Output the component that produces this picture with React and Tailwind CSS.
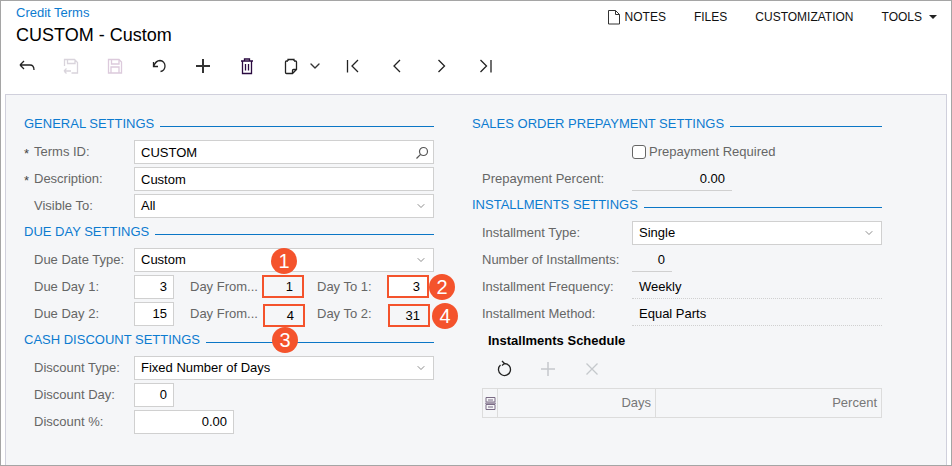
import React from 'react';
import { ChevronDown } from 'lucide-react';

const Heading = ({ children }) => (
  <div className="flex h-[27px] items-start gap-1.5">
    <span className="mt-px text-[13px] whitespace-nowrap text-[#0c7bd0]">{children}</span>
    <span className="mt-[13px] h-px flex-1 bg-[#0b76c6]" />
  </div>
);

const Label = ({ children, req, className = 'w-[100px]' }) => (
  <div className={`relative shrink-0 whitespace-nowrap text-[#666] ${className}`}>
    {req && <span className="absolute -left-[10px] top-[2px] text-[#444]">*</span>}
    {children}
  </div>
);

const Box = ({ children, className = '', right, select, search }) => (
  <div className={`flex h-6 items-center border border-[#d0d0d0] bg-white px-1.5 text-black ${right ? 'justify-end' : 'justify-between'} ${className}`}>
    <span className="whitespace-nowrap">{children}</span>
    {select && <ChevronDown size={12} strokeWidth={1.5} className="text-[#666]" />}
    {search && (
      <svg width="14" height="14" viewBox="0 0 14 14" fill="none" stroke="#555" strokeWidth="1.2" className="-mr-0.5">
        <circle cx="8.5" cy="5.5" r="4" />
        <path d="M5.6 8.4 1.5 12.5" />
      </svg>
    )}
  </div>
);

const Row = ({ children }) => <div className="mb-[3px] flex h-6 items-center pl-[10px]">{children}</div>;

const Marked = ({ children, className = '' }) => (
  <div className={`flex h-[23px] w-[42px] items-center justify-end self-start border-2 border-[#f4532c] text-black ${className}`}>{children}</div>
);

const Badge = ({ n, className }) => (
  <div className={`absolute flex h-[26px] w-[26px] items-center justify-center rounded-full bg-[#f4532c] text-[20px] text-white ${className}`}>{n}</div>
);

const Ico = ({ children, className = '', stroke = '#222' }) => (
  <svg width="20" height="20" viewBox="0 0 20 20" fill="none" stroke={stroke} strokeWidth="1.3" className={`shrink-0 ${className}`}>
    {children}
  </svg>
);

const Toolbar = () => (
  <div className="mt-[7px] flex h-6 items-center pl-4">
    <Ico className="mr-6"><path d="M3 9h10c2.500 0 4 1.500 4 5M3 9l4-4M3 9l4 4" /></Ico>
    <Ico className="mr-6" stroke="#d9d4dc"><path d="M3.500 10V3.500h10l3 3v10.500h-6M6.500 3.500v4h7.500v-4M3 15h7M3 15l2.500-2.500M3 15l2.500 2.500" /></Ico>
    <Ico className="mr-6" stroke="#dccadc"><path d="M3.500 3.500h10.500l2.500 2.500v11H3.500zM6.500 3.500v4.500h7.500v-4.500M6 17v-6h8v6" /></Ico>
    <Ico className="mr-6"><path d="M4.500 6v4.500h4.500M4.500 10.500C6 6.500 9 4.500 11 4.500a5.500 5.500 0 0 1 5 5.500c0 3-2 5-4.500 5.500" /></Ico>
    <Ico className="mr-6" stroke="#333"><path strokeWidth="2" d="M10 3v14M3 10h14" /></Ico>
    <Ico className="mr-6" stroke="#2a0a40"><path d="M4 5h12M7.500 5V3h5v2M5.500 5v12.500h9V5M8.500 8v6.500M11.500 8v6.500" /></Ico>
    <Ico className="mr-[6px]" stroke="#222"><path d="M7 5H5.500a1 1 0 0 0-1 1v10.500a1 1 0 0 0 1 1h6l4-4V6a1 1 0 0 0-1-1H13M7 5V3.500h6V5M15.500 13.500h-3a1 1 0 0 0-1 1v3" /></Ico>
    <ChevronDown size={16} strokeWidth={2} className="mr-5 text-[#333]" />
    <Ico className="mr-6"><path d="M4.500 4v12.500M15 4l-6 6 6 6" /></Ico>
    <Ico className="mr-6"><path d="M13 4l-6 6 6 6" /></Ico>
    <Ico className="mr-6"><path d="M7.500 4l6 6-6 6" /></Ico>
    <Ico><path d="M16 4v12.500M5.500 4l6 6-6 6" /></Ico>
  </div>
);

export default function App() {
  return (
    <div className="relative h-[466px] w-[952px] overflow-hidden border border-[#a5a5a5] bg-white text-[13px] leading-5 font-['Liberation_Sans',Arial,sans-serif]">
      <header className="h-[93px] pt-[4px]">
        <div className="flex">
          <div className="pl-[15px]">
            <div className="h-4 text-[13px] leading-4 text-[#0c7bd0]">Credit Terms</div>
            <div className="mt-[2px] h-6 text-[18px] leading-6 text-black">CUSTOM - Custom</div>
          </div>
          <nav className="ml-auto flex h-6 items-center pr-[14px] text-[12px] text-[#111]">
            <svg width="14" height="16" viewBox="0 0 14 16" fill="none" stroke="#333" className="mr-1"><path d="M1.500 15V1.500h7l4 4V15zM8.500 1.500v4h4" /></svg>
            <span>NOTES</span>
            <span className="ml-7">FILES</span>
            <span className="ml-7">CUSTOMIZATION</span>
            <span className="ml-7">TOOLS</span>
            <span className="ml-[7px] h-0 w-0 border-x-[4px] border-t-[4px] border-x-transparent border-t-[#222]" />
          </nav>
        </div>
        <Toolbar />
      </header>

      <main className="mx-1 flex h-[372px] gap-[38px] border border-[#d0d0dc] border-b-0 bg-[#f5f6f8] pl-[18px] pt-[18px]">
        <section className="w-[410px]">
          <Heading>GENERAL SETTINGS</Heading>
          <Row><Label req>Terms ID:</Label><Box search className="flex-1 pt-px">CUSTOM</Box></Row>
          <Row><Label req>Description:</Label><Box className="flex-1 pt-px">Custom</Box></Row>
          <Row><Label>Visible To:</Label><Box select className="flex-1">All</Box></Row>

          <Heading>DUE DAY SETTINGS</Heading>
          <Row><Label>Due Date Type:</Label><Box select className="flex-1">Custom</Box></Row>
          <Row>
            <Label>Due Day 1:</Label>
            <Box right className="w-10">3</Box>
            <Label className="ml-4 w-[72px]">Day From...</Label>
            <Marked className="pr-[9px]">1</Marked>
            <Label className="ml-[13px] w-[70px]">Day To 1:</Label>
            <Marked className="bg-white pr-[7px]">3</Marked>
          </Row>
          <Row>
            <Label>Due Day 2:</Label>
            <Box right className="w-10">15</Box>
            <Label className="ml-4 w-[73px]">Day From...</Label>
            <Marked className="mt-[2px] pr-[9px]">4</Marked>
            <Label className="ml-[12px] w-[71px]">Day To 2:</Label>
            <Marked className="mt-[2px] pr-2">31</Marked>
          </Row>

          <Heading>CASH DISCOUNT SETTINGS</Heading>
          <Row><Label>Discount Type:</Label><Box select className="flex-1">Fixed Number of Days</Box></Row>
          <Row><Label>Discount Day:</Label><Box right className="w-10">0</Box></Row>
          <Row><Label>Discount %:</Label><Box right className="w-[100px]">0.00</Box></Row>
        </section>

        <section className="w-[410px]">
          <Heading>SALES ORDER PREPAYMENT SETTINGS</Heading>
          <Row>
            <div className="ml-[150px] flex items-center gap-[3px] text-[#666]">
              <span className="h-[14px] w-[14px] rounded-[3px] border border-[#666] bg-white" />
              Prepayment Required
            </div>
          </Row>
          <Row>
            <Label className="w-[150px]">Prepayment Percent:</Label>
            <div className="flex h-6 w-[100px] items-center justify-end border-b border-[#d0d0d0] pr-[7px] text-black">0.00</div>
          </Row>
          <Heading>INSTALLMENTS SETTINGS</Heading>
          <Row><Label className="w-[150px]">Installment Type:</Label><Box select className="flex-1">Single</Box></Row>
          <Row>
            <Label className="w-[150px]">Number of Installments:</Label>
            <div className="flex h-6 w-10 items-center justify-end border-b border-[#d0d0d0] pr-[7px] text-black">0</div>
          </Row>
          <Row>
            <Label className="w-[150px]">Installment Frequency:</Label>
            <div className="flex h-6 flex-1 items-center border-b border-dotted border-[#d0d0d0] pl-[7px] text-black">Weekly</div>
          </Row>
          <Row>
            <Label className="w-[150px]">Installment Method:</Label>
            <div className="flex h-6 flex-1 items-center border-b border-dotted border-[#d0d0d0] pl-[7px] text-black">Equal Parts</div>
          </Row>
          <div className="mt-[5px] pl-4 font-bold text-black">Installments Schedule</div>
          <div className="mt-[6px] flex h-6 items-center gap-6 pl-[22px]">
            <Ico><path d="M8 2l2.500 2.500L8 6.500M10.500 4.500a6 6 0 1 1-4 1.500" /></Ico>
            <Ico stroke="#c5c8cc"><path strokeWidth="1.500" d="M10 3v14M3 10h14" /></Ico>
            <Ico stroke="#c5c8cc"><path d="M4.500 4.500l11 11M15.500 4.500l-11 11" /></Ico>
          </div>
          <div className="mt-[7px] ml-[10px] flex h-[30px] border border-[#dcdcdc] text-[#777]">
            <div className="flex w-[15px] items-center justify-center border-r border-[#dcdcdc]">
              <svg width="11" height="13" viewBox="0 0 11 13" fill="none" stroke="#7a6a85"><path d="M1 .5h9v4.500H1zM1 7.500h9v5H1zM3 3h5M3 10h5M0 6.200h11" /></svg>
            </div>
            <div className="flex w-[158px] items-center justify-end border-r border-[#dcdcdc] pr-[4px]">Days</div>
            <div className="flex flex-1 items-center justify-end pr-[4px]">Percent</div>
          </div>
        </section>
      </main>

      <Badge n="1" className="left-[270px] top-[247px]" />
      <Badge n="2" className="left-[428px] top-[273px]" />
      <Badge n="3" className="left-[271px] top-[326px]" />
      <Badge n="4" className="left-[431px] top-[302px]" />
    </div>
  );
}
